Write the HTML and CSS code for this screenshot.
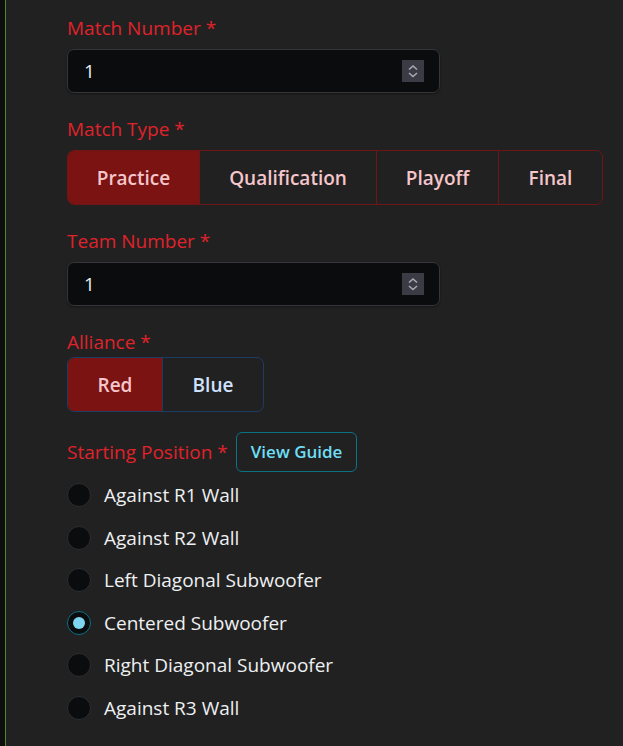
FILE: index.html
```html
<!DOCTYPE html>
<html>
<head>
<meta charset="utf-8">
<link rel="stylesheet" href="styles.css">
</head>
<body>
<div class="rail"></div>
<main class="main">
  <div class="field">
    <div class="label">Match Number *</div>
    <div class="input">
      <span>1</span>
      <span class="spin"><svg width="22" height="22" viewBox="0 0 22 22"><path d="M7 9.5 L11 6 L15 9.5" fill="none" stroke="#a9a9b0" stroke-width="1.6"/><path d="M7 13 L11 16.5 L15 13" fill="none" stroke="#a9a9b0" stroke-width="1.6"/></svg></span>
    </div>
  </div>
  <div class="field">
    <div class="label">Match Type *</div>
    <div class="group red">
      <div class="btn active">Practice</div>
      <div class="btn">Qualification</div>
      <div class="btn">Playoff</div>
      <div class="btn">Final</div>
    </div>
  </div>
  <div class="field">
    <div class="label">Team Number *</div>
    <div class="input">
      <span>1</span>
      <span class="spin"><svg width="22" height="22" viewBox="0 0 22 22"><path d="M7 9.5 L11 6 L15 9.5" fill="none" stroke="#a9a9b0" stroke-width="1.6"/><path d="M7 13 L11 16.5 L15 13" fill="none" stroke="#a9a9b0" stroke-width="1.6"/></svg></span>
    </div>
  </div>
  <div class="field alliance-field">
    <div class="label tight">Alliance *</div>
    <div class="group alliance">
      <div class="btn active">Red</div>
      <div class="btn blue">Blue</div>
    </div>
  </div>
  <div class="field">
    <div class="row">
      <div class="label flat">Starting Position *</div>
      <div class="guide">View Guide</div>
    </div>
    <div class="radios">
      <div class="radio"><span class="dot"></span><span>Against R1 Wall</span></div>
      <div class="radio"><span class="dot"></span><span>Against R2 Wall</span></div>
      <div class="radio"><span class="dot"></span><span>Left Diagonal Subwoofer</span></div>
      <div class="radio"><span class="dot checked"></span><span>Centered Subwoofer</span></div>
      <div class="radio"><span class="dot"></span><span>Right Diagonal Subwoofer</span></div>
      <div class="radio"><span class="dot"></span><span>Against R3 Wall</span></div>
    </div>
  </div>
</main>
</body>
</html>
```
FILE: styles.css
```css
* { box-sizing: border-box; }
html, body { margin: 0; height: 100%; }
body {
  background: #212121;
  display: flex;
  font-family: "Open Sans", "Noto Sans", sans-serif;
  font-size: 19px;
  line-height: 30px;
  color: #dee2e6;
  overflow: hidden;
}
.rail {
  width: 6px;
  flex: none;
  background: #0e0e0e;
  border-right: 1px solid #4f8a1e;
}
.main {
  padding: 13px 0 0 61px;
  flex: 1;
}
.field { margin-bottom: 21px; }
.field.alliance-field { margin-bottom: 20px; }
.label {
  color: #e0222b;
  margin-bottom: 6px;
}
.label.tight { margin-bottom: 0; }
.label.flat { margin-bottom: 0; }
.input {
  width: 373px;
  height: 44px;
  background: #0b0c0e;
  border: 1px solid #34363a;
  border-radius: 7px;
  display: flex;
  align-items: center;
  justify-content: space-between;
  padding: 0 15px 0 16px;
  color: #e9ecef;
  box-shadow: 0 1px 2px rgba(0,0,0,0.4);
}
.spin {
  width: 22px;
  height: 22px;
  background: #3b3b45;
  display: flex;
}
.group {
  display: inline-flex;
  border: 1px solid #6e1515;
  border-radius: 7px;
  overflow: hidden;
}
.btn {
  height: 53px;
  display: flex;
  align-items: center;
  justify-content: center;
  font-weight: 600;
  color: #f5c6cb;
  border-left: 1px solid #6e1515;
}
.btn:first-child { border-left: none; }
.group.red .btn:nth-child(1) { width: 131px; }
.group.red .btn:nth-child(2) { width: 177px; }
.group.red .btn:nth-child(3) { width: 122px; }
.group.red .btn:nth-child(4) { width: 104px; }
.btn.active { background: #7b1313; }
.group.alliance { border-color: #1c3c64; }
.group.alliance .btn:nth-child(1) { width: 95px; border-right: 1px solid #1c3c64; }
.group.alliance .btn { border-left: none; }
.btn.blue { width: 100px; color: #cfe2ff; }
.group.alliance .btn.active { background: #7b1313; }
.row {
  display: flex;
  align-items: center;
  gap: 8px;
  height: 40px;
}
.guide {
  height: 40px;
  padding: 0 14px;
  border: 1px solid #0b7286;
  border-radius: 6px;
  display: flex;
  align-items: center;
  color: #6edff6;
  font-weight: 600;
  font-size: 17px;
}
.radios {
  margin-top: 8px;
  display: flex;
  flex-direction: column;
  gap: 12.5px;
}
.radio {
  display: flex;
  align-items: center;
  height: 30px;
  gap: 13px;
  color: #eef0f2;
}
.dot {
  width: 24px;
  height: 24px;
  border-radius: 50%;
  background: #0b0c0e;
  border: 1px solid #2c2e32;
  flex: none;
  display: flex;
  align-items: center;
  justify-content: center;
}
.dot.checked { border-color: #0b7286; }
.dot.checked::after {
  content: "";
  width: 12px;
  height: 12px;
  border-radius: 50%;
  background: #7dd6ef;
}
```
